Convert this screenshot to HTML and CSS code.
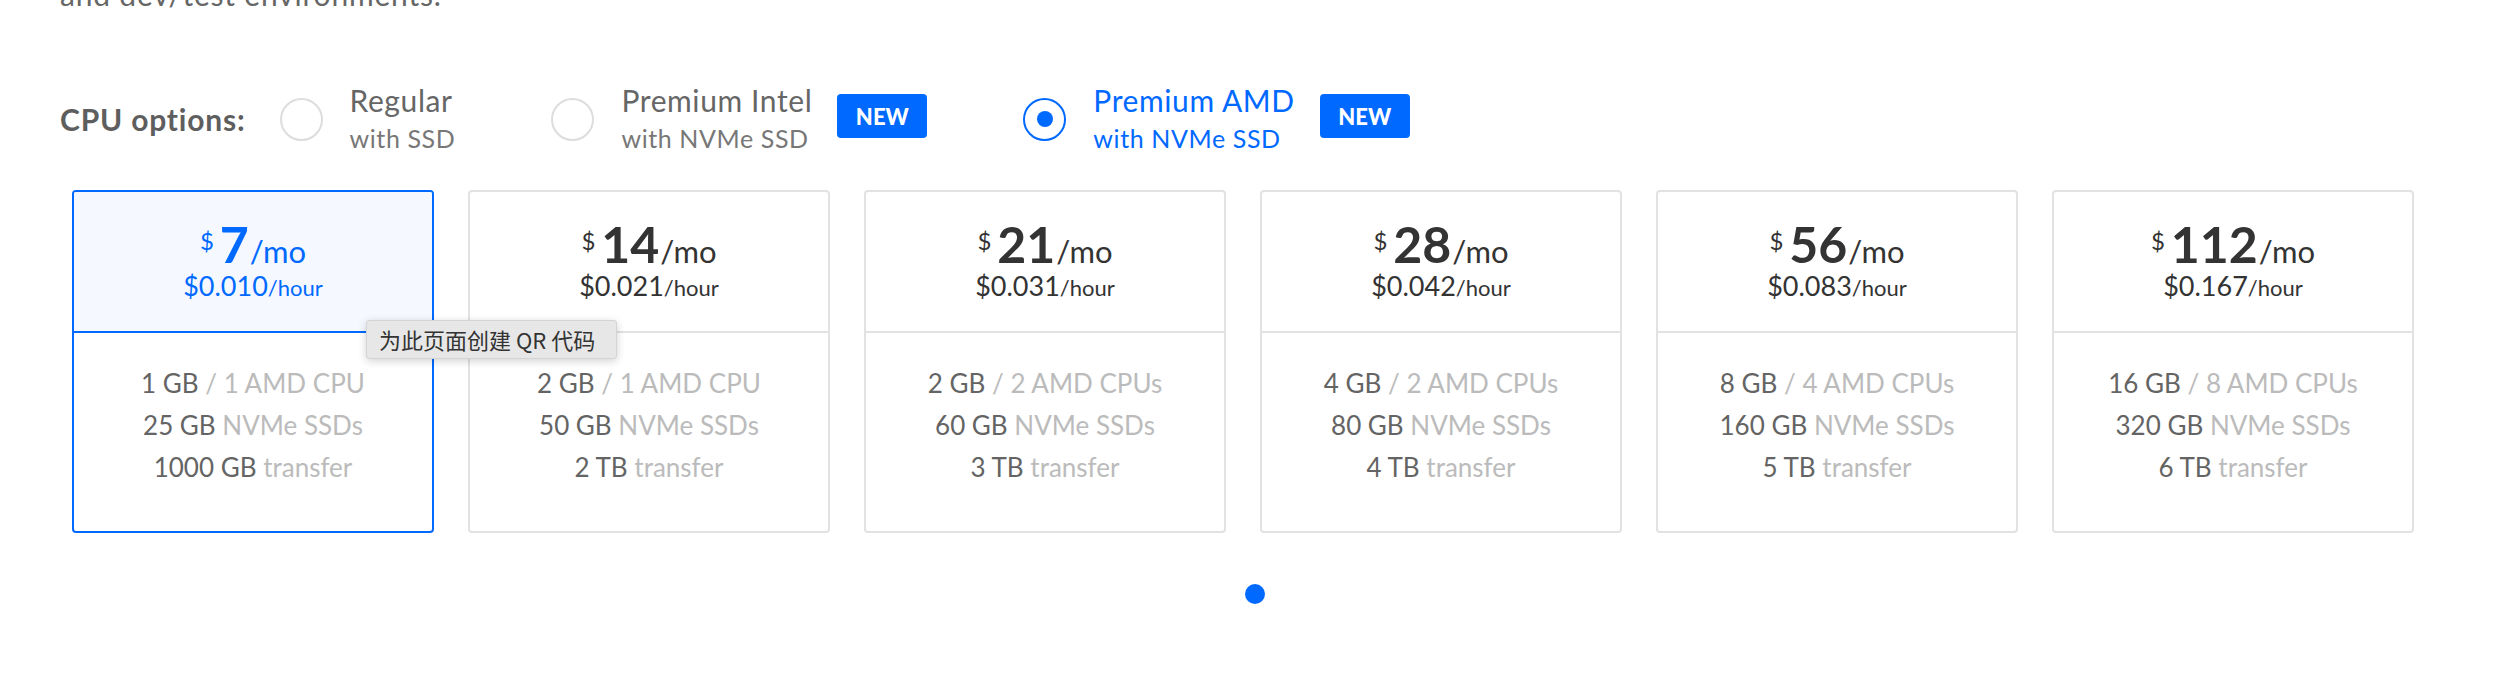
FILE: index.html
```html
<!DOCTYPE html>
<html>
  <head>
    <meta name="viewport" content="width=device-width, initial-scale=1">
    <title>Droplet plans</title>
    <link rel="stylesheet" href="styles.css">
  </head>
<body>
  <div class="page">

    <p class="intro">and dev/test environments.</p>

    <div class="cpuoptions">
      <div class="cpulabel">CPU options:</div>

      <div class="option">
        <span class="radio"></span>
        <div class="optiontext">
          <div class="optionname">Regular</div>
          <div class="optionsub">with SSD</div>
        </div>
      </div>

      <div class="option">
        <span class="radio"></span>
        <div class="optiontext">
          <div class="optionname">Premium Intel</div>
          <div class="optionsub">with NVMe SSD</div>
        </div>
        <span class="newbadge">NEW</span>
      </div>

      <div class="option selected">
        <span class="radio"></span>
        <div class="optiontext">
          <div class="optionname">Premium AMD</div>
          <div class="optionsub">with NVMe SSD</div>
        </div>
        <span class="newbadge">NEW</span>
      </div>
    </div>

    <div class="plans">
      <div class="plan active">
        <div class="planhead">
          <div class="price"><span class="cur">$</span>7<span class="per">/mo</span></div>
          <div class="hourly">$0.010<span class="per">/hour</span></div>
        </div>
        <div class="planbody">
          <div>1 GB <span class="unit">/ 1 AMD CPU</span></div>
          <div>25 GB <span class="unit">NVMe SSDs</span></div>
          <div>1000 GB <span class="unit">transfer</span></div>
        </div>
      </div>

      <div class="plan">
        <div class="planhead">
          <div class="price"><span class="cur">$</span>14<span class="per">/mo</span></div>
          <div class="hourly">$0.021<span class="per">/hour</span></div>
        </div>
        <div class="planbody">
          <div>2 GB <span class="unit">/ 1 AMD CPU</span></div>
          <div>50 GB <span class="unit">NVMe SSDs</span></div>
          <div>2 TB <span class="unit">transfer</span></div>
        </div>
      </div>

      <div class="plan">
        <div class="planhead">
          <div class="price"><span class="cur">$</span>21<span class="per">/mo</span></div>
          <div class="hourly">$0.031<span class="per">/hour</span></div>
        </div>
        <div class="planbody">
          <div>2 GB <span class="unit">/ 2 AMD CPUs</span></div>
          <div>60 GB <span class="unit">NVMe SSDs</span></div>
          <div>3 TB <span class="unit">transfer</span></div>
        </div>
      </div>

      <div class="plan">
        <div class="planhead">
          <div class="price"><span class="cur">$</span>28<span class="per">/mo</span></div>
          <div class="hourly">$0.042<span class="per">/hour</span></div>
        </div>
        <div class="planbody">
          <div>4 GB <span class="unit">/ 2 AMD CPUs</span></div>
          <div>80 GB <span class="unit">NVMe SSDs</span></div>
          <div>4 TB <span class="unit">transfer</span></div>
        </div>
      </div>

      <div class="plan">
        <div class="planhead">
          <div class="price"><span class="cur">$</span>56<span class="per">/mo</span></div>
          <div class="hourly">$0.083<span class="per">/hour</span></div>
        </div>
        <div class="planbody">
          <div>8 GB <span class="unit">/ 4 AMD CPUs</span></div>
          <div>160 GB <span class="unit">NVMe SSDs</span></div>
          <div>5 TB <span class="unit">transfer</span></div>
        </div>
      </div>

      <div class="plan">
        <div class="planhead">
          <div class="price"><span class="cur">$</span>112<span class="per">/mo</span></div>
          <div class="hourly">$0.167<span class="per">/hour</span></div>
        </div>
        <div class="planbody">
          <div>16 GB <span class="unit">/ 8 AMD CPUs</span></div>
          <div>320 GB <span class="unit">NVMe SSDs</span></div>
          <div>6 TB <span class="unit">transfer</span></div>
        </div>
      </div>
    </div>

    <div class="pager"><span class="dot"></span></div>

    <div class="tooltip">为此页面创建 QR 代码</div>
  </div>
</body>
</html>
```

FILE: styles.css
```css
body, html {margin: 0; padding: 0; background-color: white; overflow: hidden;}

.page {
  position: relative;
  height: 674px;
  font-family: Lato, "Noto Sans", sans-serif;
  color: #333;
}

.intro {
  margin: -23px 0 0 0;
  padding-left: 60px;
  font-size: 30px;
  letter-spacing: 0.8px;
  line-height: 34px;
  color: #666;
}

.cpuoptions {
  display: flex;
  align-items: center;
  height: 76px;
  margin-top: 70px;
  padding-left: 60px;
}

.cpulabel {
  font-size: 30px;
  letter-spacing: 0.8px;
  font-weight: bold;
  color: #5e5e5e;
  margin-right: 34px;
}

.option {
  display: flex;
  align-items: center;
  margin-right: 96px;
}

.radio {
  box-sizing: border-box;
  width: 43px;
  height: 43px;
  border: 2px solid #dddddd;
  border-radius: 50%;
  margin-right: 27px;
  display: flex;
  align-items: center;
  justify-content: center;
}

.option.selected .radio {
  border-color: #0069ff;
}

.option.selected .radio::after {
  content: "";
  width: 16px;
  height: 16px;
  border-radius: 50%;
  background-color: #0069ff;
}

.optionname {
  font-size: 30px;
  letter-spacing: 0.6px;
  line-height: 38px;
  color: #666;
}

.optionsub {
  font-size: 25px;
  letter-spacing: 0.6px;
  line-height: 38px;
  color: #777;
}

.option.selected .optionname,
.option.selected .optionsub {
  color: #0069ff;
}

.newbadge {
  display: flex;
  align-items: center;
  justify-content: center;
  width: 90px;
  height: 44px;
  margin-left: 25px;
  margin-top: -6px;
  border-radius: 4px;
  background-color: #0069ff;
  color: white;
  font-size: 22px;
  font-weight: 900;
}

.plans {
  display: grid;
  grid-template-columns: repeat(6, 362px);
  column-gap: 34px;
  margin-top: 33px;
  padding-left: 72px;
}

.plan {
  box-sizing: border-box;
  height: 343px;
  border: 2px solid #e2e2e2;
  border-radius: 4px;
  text-align: center;
}

.planhead {
  padding: 27px 0 26px 0;
  border-bottom: 2px solid #e2e2e2;
  border-radius: 2px 2px 0 0;
}

.price {
  font-size: 50px;
  line-height: 50px;
  font-weight: bold;
  color: #333;
}

.price .cur {
  font-size: 24px;
  line-height: 1;
  font-weight: normal;
  vertical-align: 13px;
  margin-right: 6px;
}

.price .per {
  font-size: 31px;
  line-height: 1;
  font-weight: normal;
  margin-left: 1px;
}

.hourly {
  font-size: 27px;
  line-height: 34px;
  color: #333;
}

.hourly .per {
  font-size: 22px;
}

.planbody {
  padding-top: 29px;
  font-size: 26px;
  line-height: 42px;
  color: #646464;
}

.unit {
  color: #bbbbbb;
}

.plan.active {
  border-color: #0069ff;
}

.plan.active .planhead {
  background-color: #f5f9ff;
  border-bottom-color: #0069ff;
}

.plan.active .price,
.plan.active .hourly {
  color: #0069ff;
}

.pager {
  display: flex;
  justify-content: center;
  margin-top: 51px;
  padding-right: 6px;
}

.dot {
  width: 20px;
  height: 20px;
  border-radius: 50%;
  background-color: #0069ff;
}

.tooltip {
  position: absolute;
  left: 366px;
  top: 343px;
  box-sizing: border-box;
  width: 251px;
  height: 39px;
  padding-left: 12px;
  line-height: 37px;
  background-color: #e7e7e7;
  border: 1px solid #d4d4d4;
  border-radius: 3px;
  box-shadow: 0 2px 8px rgba(0, 0, 0, 0.18);
  font-family: "Noto Sans CJK SC", sans-serif;
  font-size: 22px;
  color: #333;
}
```
